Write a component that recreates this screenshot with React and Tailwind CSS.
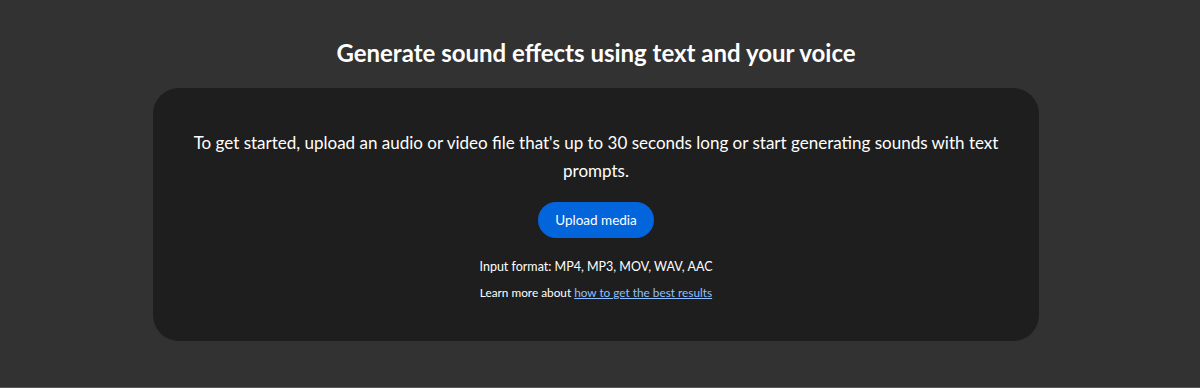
export default function App() {
  return (
    <div className="h-[388px] w-full bg-[#323232] border-b border-[#5a5a5a] flex flex-col items-center pr-[8px]" style={{ fontFamily: "Lato, 'Open Sans', sans-serif" }}>
      <h1 className="mt-[38px] text-[24px] leading-[30px] font-bold text-white">Generate sound effects using text and your voice</h1>
      <div className="mt-[20px] w-[886px] h-[253px] rounded-[26px] bg-[#1e1e1e] flex flex-col items-center pt-[41px]">
        <p className="w-[820px] text-center text-[17px] leading-[28px] text-white">To get started, upload an audio or video file that's up to 30 seconds long or start generating sounds with text prompts.</p>
        <button className="mt-[17px] h-[36px] w-[116px] rounded-full bg-[#0265dc] text-[13.5px] text-white">Upload media</button>
        <p className="mt-[19px] text-[12.5px] leading-[20px] text-white">Input format: MP4, MP3, MOV, WAV, AAC</p>
        <p className="mt-[7px] text-[11.8px] leading-[18px] text-white">Learn more about <a href="#" className="text-[#8fc0ff] underline">how to get the best results</a></p>
      </div>
    </div>
  );
}
